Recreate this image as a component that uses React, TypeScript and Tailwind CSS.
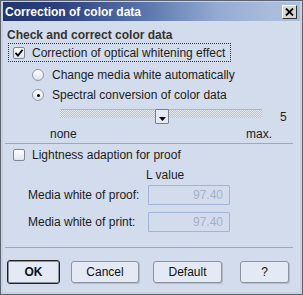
import React from "react";

function CheckBox({ checked }: { checked?: boolean }) {
  return (
    <div className="w-[12px] h-[12px] shrink-0 rounded-[2px] border border-[#7f8796] bg-[linear-gradient(to_bottom,#ffffff,#dfe5f0)] flex items-center justify-center">
      {checked && (
        <svg width="10" height="10" viewBox="0 0 10 10">
          <path d="M1.5 4.8 L4 7.5 L8.6 1.8" fill="none" stroke="#000" strokeWidth="1.8" />
        </svg>
      )}
    </div>
  );
}

function Radio({ checked }: { checked?: boolean }) {
  return (
    <div className="w-[12px] h-[12px] shrink-0 rounded-full border border-[#9098a6] bg-[linear-gradient(to_bottom,#ffffff,#dbe2ee)] flex items-center justify-center">
      {checked && <div className="w-[3px] h-[3px] rounded-full bg-black" />}
    </div>
  );
}

function Btn({ children, w, primary }: { children: React.ReactNode; w: string; primary?: boolean }) {
  return (
    <div
      className={
        "flex items-center justify-center rounded-[3px] bg-[#e3e9f5] text-[#111] " +
        w +
        (primary
          ? " h-[24px] border border-[#202020] shadow-[inset_0_0_0_1px_#8d949f] font-bold"
          : " h-[22px] border border-[#8d949f] shadow-[1px_1px_0_#b4bccb]")
      }
    >
      {children}
    </div>
  );
}

export default function App() {
  return (
    <div className="w-[303px] h-[295px] border border-[#5c6474] bg-[#c9d1df] pt-[1px] px-[2px] pb-[2px] flex flex-col font-['Liberation_Sans',Arial,sans-serif] text-[12px] leading-[14px] text-[#1c1c1c]">
      {/* title bar */}
      <div className="h-[19px] shrink-0 flex items-center pl-[2px] bg-[linear-gradient(to_right,#22356f_0%,#2b3f7e_18%,#5a76ad_48%,#93aad2_72%,#a9bcdc_90%,#abbedd_100%)]">
        <span className="font-bold text-white">Correction of color data</span>
        <div className="ml-auto mr-[3px] w-[15px] h-[14px] bg-[#d6d6d6] border-t border-l border-t-white border-l-white border-b border-r border-b-[#303030] border-r-[#303030] flex items-center justify-center">
          <svg width="9" height="8" viewBox="0 0 9 8">
            <path d="M1 0.5 L8 7.5 M8 0.5 L1 7.5" stroke="#000" strokeWidth="1.8" />
          </svg>
        </div>
      </div>

      {/* body */}
      <div className="flex-1 bg-[#d3dcec] flex flex-col">
        <div className="ml-[4px] mt-[7px] h-[14px] font-bold text-[#333]">Check and correct color data</div>

        <div className="ml-[5px] mt-[1px] w-[223px] h-[19px] border border-dotted border-[#333] flex items-center pl-[4px]">
          <CheckBox checked />
          <span className="ml-[7px]">Correction of optical whitening effect</span>
        </div>

        <div className="ml-[29px] mt-[6px] h-[14px] flex items-center">
          <Radio />
          <span className="ml-[8px]">Change media white automatically</span>
        </div>
        <div className="ml-[29px] mt-[6px] h-[14px] flex items-center">
          <Radio checked />
          <span className="ml-[8px]">Spectral conversion of color data</span>
        </div>

        <div className="mt-[7px] h-[14px] flex items-start">
          <div className="relative ml-[57px] w-[202px] h-[9px] border-t border-[#b0b6c0] bg-[image:repeating-conic-gradient(#b9bec8_0%_25%,#e6eaf1_0%_50%)] bg-size-[2px_2px]">
            <div className="absolute left-[95px] top-[-1px] w-[14px] h-[15px] border border-[#7a808b] bg-[#e4eaf4] rounded-[1px] flex items-end justify-center pb-[2px]">
              <svg width="7" height="4" viewBox="0 0 7 4">
                <path d="M0 0 L7 0 L3.5 4 Z" fill="#000" />
              </svg>
            </div>
          </div>
          <span className="ml-[18px] mt-[1px]">5</span>
        </div>

        <div className="mt-[4px] h-[14px] flex ml-[47px] mr-[28px]">
          <span>none</span>
          <span className="ml-auto">max.</span>
        </div>

        <div className="mt-[2px] ml-[2px] mr-[7px] h-px bg-[#97a9c9]" />

        <div className="ml-[10px] mt-[4px] h-[14px] flex items-center">
          <CheckBox />
          <span className="ml-[7px]">Lightness adaption for proof</span>
        </div>

        <div className="ml-[143px] mt-[6px] h-[14px]">L value</div>

        <div className="ml-[25px] mt-[3px] h-[20px] flex items-center">
          <span className="w-[120px]">Media white of proof:</span>
          <div className="w-[82px] h-[20px] border border-[#9fb4d6] rounded-[1px] flex items-center justify-end pr-[6px] text-[#a3b0ca]">97.40</div>
        </div>
        <div className="ml-[25px] mt-[7px] h-[20px] flex items-center">
          <span className="w-[120px]">Media white of print:</span>
          <div className="w-[82px] h-[20px] border border-[#9fb4d6] rounded-[1px] flex items-center justify-end pr-[6px] text-[#a3b0ca]">97.40</div>
        </div>

        <div className="mt-[15px] ml-[2px] mr-[7px] h-px bg-[#97a9c9]" />

        <div className="mt-[12px] h-[24px] flex items-center">
          <div className="ml-[4px]">
            <Btn w="w-[53px]" primary>OK</Btn>
          </div>
          <div className="ml-[11px]">
            <Btn w="w-[68px]">Cancel</Btn>
          </div>
          <div className="ml-[14px]">
            <Btn w="w-[69px]">Default</Btn>
          </div>
          <div className="ml-[18px]">
            <Btn w="w-[49px]">?</Btn>
          </div>
        </div>
      </div>
    </div>
  );
}
